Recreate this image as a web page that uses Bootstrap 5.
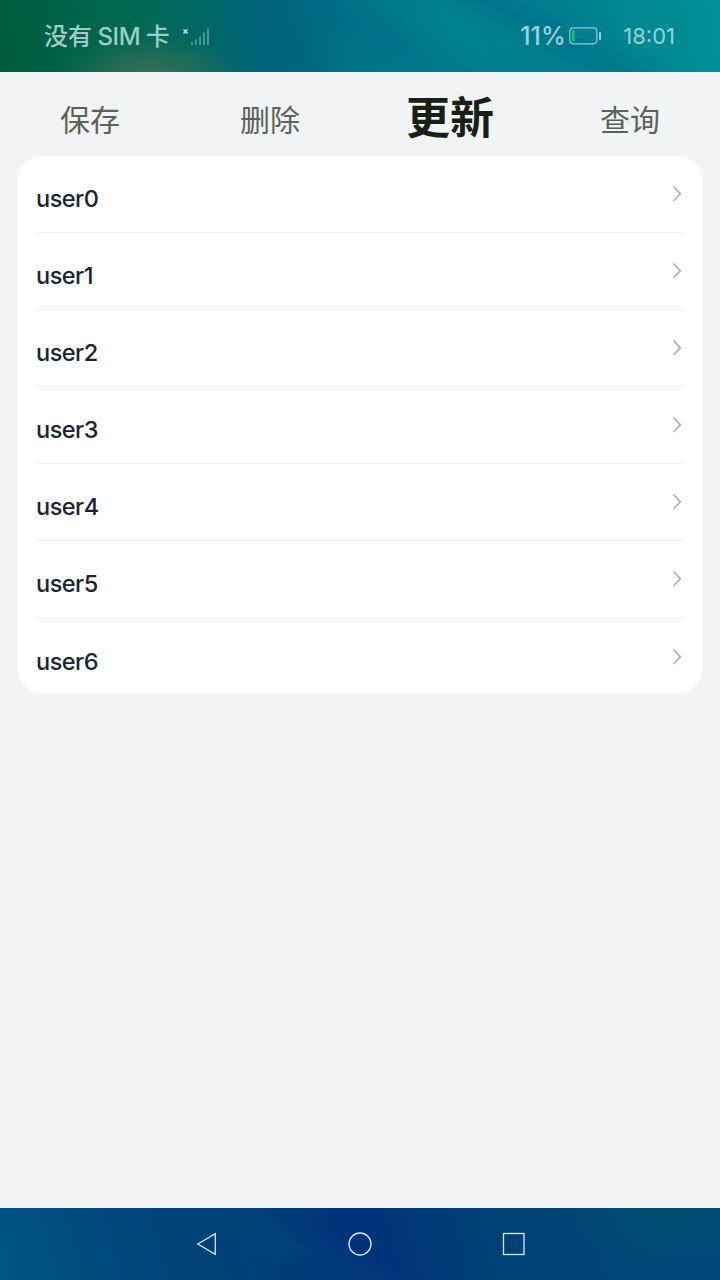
<!DOCTYPE html>
<html lang="zh-CN">
<head>
<meta charset="utf-8">
<meta name="viewport" content="width=device-width, initial-scale=1">
<title>用户</title>
<link href="https://cdn.jsdelivr.net/npm/bootstrap@5.3.0/dist/css/bootstrap.min.css" rel="stylesheet">
<style>
html,body{height:100%}
body{background:#f1f3f5;font-family:Inter,"Noto Sans CJK SC",sans-serif;overflow:hidden}
.statusbar{height:72px;padding:0 45px 0 44px;color:#9ccdc6;
 background:
 radial-gradient(ellipse 95px 42px at 150px 78px,rgba(66,112,88,.95),rgba(66,112,88,0)),
 linear-gradient(28deg,transparent 46%,rgba(0,95,130,.22) 52%,transparent 60%,transparent 66%,rgba(0,95,130,.3) 73%,transparent 80%),
 linear-gradient(80deg,#005a3c 0,#006850 18%,#00695f 27%,#006478 36%,#00667f 41%,#007388 49%,#008090 62%,#007f90 78%,#008a92 92%,#009196 100%)}
.carrier{font-size:24px;font-weight:500;line-height:72px;font-family:"Noto Sans CJK SC",sans-serif}
.carrier .latin{font-family:Inter,sans-serif;letter-spacing:-.3px}
.numeric{font-family:Inter,sans-serif;line-height:72px;color:#94d3dc}
.battery-level{font-size:25px;font-weight:500;letter-spacing:0}
.clock{font-size:22px;margin-left:22.500px;letter-spacing:0}
.tabs{height:84px}
.tabs button{font-size:30px;line-height:44px;color:#5b6257;padding:12px 0 0;border-radius:0}
.tabs .active{font-size:44px;font-weight:700;color:#182016;padding:7px 0 0}
.users{margin:0 18px;padding:0 18px;height:538px;border-radius:24px;background:#fff}
.user-row{height:77.1px;border-bottom:1.5px solid #f2f2f2;padding-top:5px}
.user-row:last-child{border:0}
.user-name{font-size:23.500px;line-height:36px;font-weight:500;letter-spacing:-.5px;color:#182431;margin-top:20px}
.chev{margin:23px 1.500px 0 0}
.sysnav{height:72px;
 background:
 linear-gradient(25deg,transparent 35%,rgba(0,82,125,.2) 42%,transparent 48%),
 radial-gradient(ellipse 110px 60px at 670px 0,rgba(0,84,104,.6),transparent),
 linear-gradient(75deg,#005684 0,#00487d 16%,#003f76 32%,#003e78 38%,#00347a 47%,#00347a 54%,#003f76 65%,#004276 76%,#004877 88%,#00487c 100%)}
</style>
</head>
<body class="d-flex flex-column">
<header class="statusbar d-flex justify-content-between align-items-center flex-shrink-0">
 <div class="d-flex align-items-center">
  <span class="carrier">没有 <span class="latin">SIM</span> 卡</span>
  <svg class="ms-2" width="34" height="24" viewBox="0 0 34 24" fill="none">
   <path d="M5.500 5.500l4 4M9.500 5.500l-4 4" stroke="#bce6df" stroke-width="1.600"/>
   <path d="M14 18v3M18 15.500v5.500M22 12.500v8.500M26 8.500v12.500M30 4.500v16.500" stroke="#5da49f" stroke-opacity=".75" stroke-width="2"/>
  </svg>
 </div>
 <div class="d-flex align-items-center">
  <span class="numeric battery-level">11%</span>
  <svg style="margin-left:3px" width="32" height="18" viewBox="0 0 32 18">
   <rect x=".8" y=".8" width="27" height="16" rx="3.500" fill="none" stroke="#8cd0d6" stroke-width="1.200"/>
   <rect x="3" y="3" width="2.500" height="11.500" rx="1" fill="#00d35c"/>
   <rect x="30" y="5" width="2" height="8" rx=".8" fill="#91d1d9"/>
  </svg>
  <span class="numeric clock">18:01</span>
 </div>
</header>
<nav class="tabs row g-0 align-items-center flex-shrink-0">
 <div class="col-3"><button class="btn border-0 w-100">保存</button></div>
 <div class="col-3"><button class="btn border-0 w-100">删除</button></div>
 <div class="col-3"><button class="btn border-0 w-100 active">更新</button></div>
 <div class="col-3"><button class="btn border-0 w-100">查询</button></div>
</nav>
<main class="flex-grow-1">
 <div class="users" id="users"></div>
</main>
<footer class="sysnav flex-shrink-0 d-flex align-items-center justify-content-center">
 <svg width="330" height="26" viewBox="0 0 330 26" fill="none" stroke="#d3ecf8" stroke-width="1.300">
  <path d="M2.800 13L20.300 2.600V23.400Z"/>
  <circle cx="165" cy="13" r="11"/>
  <rect x="308.500" y="2.500" width="20.500" height="21"/>
 </svg>
</footer>
<script src="https://cdn.jsdelivr.net/npm/bootstrap@5.3.0/dist/js/bootstrap.bundle.min.js"></script>
<script>
document.getElementById('users').innerHTML = Array.from({length: 7}, (_, i) => `
 <div class="user-row d-flex justify-content-between align-items-start">
  <span class="user-name">user${i}</span>
  <svg class="chev" width="11" height="18" viewBox="0 0 11 18" fill="none" stroke="#b3b3b3" stroke-width="1.800"><path d="M1.500 2.500L8.300 9.800L1.500 17"/></svg>
 </div>`).join('');
</script>
</body>
</html>
